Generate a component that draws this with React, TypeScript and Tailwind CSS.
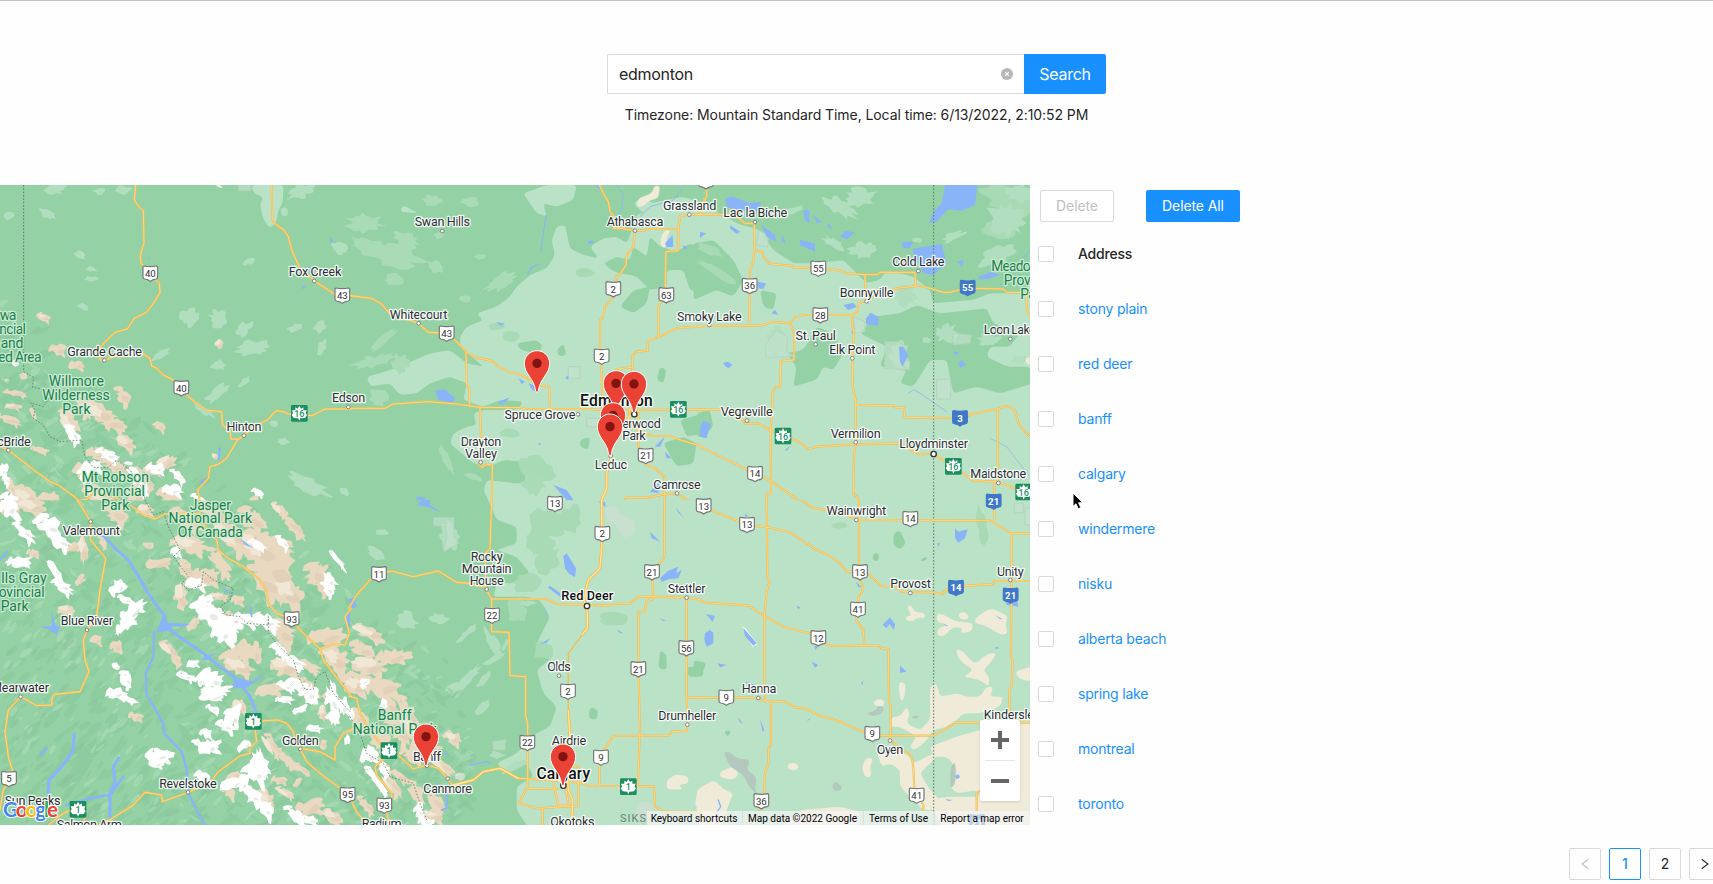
import React from "react";

type Tile = "A" | "B" | "C" | "D" | "E" | "F";
type Blob = [number, number, number, number, number];

const TILES: Tile[] = ["A", "B", "C", "D", "E", "F"];
const ORIGIN: Record<Tile, [number, number]> = {
  A: [0, 180], B: [350, 180], C: [700, 180], D: [0, 500], E: [350, 500], F: [700, 500],
};

let seed = 7;
const rnd = () => {
  seed = (seed * 16807) % 2147483647;
  return seed / 2147483647;
};

// An irregular polygon inscribed in a rotated ellipse.
const blobPath = ([x, y, w, h, deg]: Blob, rough = 0.46) => {
  const n = Math.max(8, Math.min(26, Math.round((w + h) / (rough > 0.5 ? 6 : 9))));
  const a = (deg * Math.PI) / 180;
  let d = "";
  for (let i = 0; i < n; i++) {
    const t = (i / n) * Math.PI * 2;
    const r = 1.18 - rnd() * rough;
    const px = (Math.cos(t) * w * r) / 2;
    const py = (Math.sin(t) * h * r) / 2;
    d += `${i ? "L" : "M"}${(x + px * Math.cos(a) - py * Math.sin(a)).toFixed(1)} ${(y + px * Math.sin(a) + py * Math.cos(a)).toFixed(1)}`;
  }
  return d + "Z";
};

const streaks = (count: number, size: number) => {
  let d = "";
  for (let i = 0; i < count; i++) {
    const x = rnd() * 470;
    const y = 265 + rnd() * 565;
    const edge = 295 + x * 0.8;
    if (y < edge + rnd() * 50) continue;
    const l = size * (0.5 + rnd());
    d += blobPath([x, y, l, l * (0.2 + rnd() * 0.25), x < 170 && y > 600 ? -60 + rnd() * 30 : rnd() > 0.35 ? -50 + rnd() * 40 : 30 + rnd() * 25]);
  }
  return d;
};
const DARK_STREAKS = streaks(1500, 16);
const LIGHT_STREAKS = streaks(800, 11);
const GREY_STREAKS = streaks(300, 12);

const farmland: Partial<Record<Tile, string[]>> = {
  A: ["755,15 850,15 848,70 835,90 830,125 810,145 790,118 780,75 790,50 760,40"],
  B: [
    "500,320 540,285 590,265 615,225 605,180 620,140 645,135 660,205 700,225 745,235 720,200 760,175 800,170 830,190 850,140 860,105 920,80 1060,90 1060,990 430,990 400,930 410,900 500,910 600,900 540,870 560,830 520,845 460,840 420,860 370,850 300,790 310,760 350,740 380,735 370,700 400,690 500,690 520,665 450,660 400,680 340,660 350,610 300,590 240,610 200,640 150,645 120,610 60,620 50,590 90,580 150,560 240,520 300,510 350,550 400,560 330,500 330,470 350,440 400,420 380,400 440,380 480,350",
    "520,40 590,15 680,15 670,60 620,80 580,70 590,110 560,100",
    "850,70 880,50 990,40 1060,60 1060,110 970,110 880,100",
    "150,95 160,75 205,100",
  ],
  C: ["-20,15 40,90 110,130 180,150 220,210 280,250 350,250 430,240 500,310 540,300 560,270 640,290 690,330 700,370 820,360 870,340 970,340 1000,300 1000,990 -20,990"],
  E: ["410,-10 440,60 500,80 500,130 440,150 500,170 540,220 490,250 440,250 430,290 530,290 570,300 600,350 560,430 610,470 560,510 580,580 620,620 600,680 560,700 500,760 440,790 460,810 530,790 550,830 500,860 500,930 540,990 1060,990 1060,-50 410,-50"],
  F: ["-20,-50 1000,-50 1000,990 -20,990"],
};

const forest: Partial<Record<Tile, string[]>> = {
  B: [
    "690,15 790,15 800,60 850,110 830,160 800,160 740,140 700,200 660,170 670,110",
    "930,200 980,215 1020,190 1050,200 1050,340 1020,330 1000,270 950,270 950,320 900,330 860,290 790,275 760,250 800,230 840,240 850,200 890,230 900,170",
    "870,15 1060,15 1060,70 1000,50 900,70", "500,490 560,480 580,500 560,520 510,510",
    "620,510 640,490 650,525 625,530", "850,330 900,320 890,370 850,400 810,380", "930,560 950,570 940,610 920,600",
    "940,790 1000,770 1040,790 1030,850 980,860", "990,720 1060,700 1060,760 1010,770", "690,780 720,770 715,810 690,800",
  ],
  C: [
    "-20,190 40,180 100,240 130,300 100,350 50,330 -20,360",
    "520,410 600,400 650,375 720,400 860,385 880,430 960,460 930,500 870,500 860,530 920,560 990,560 1000,610 900,640 830,620 760,640 740,540 690,540 640,620 600,610 620,570 540,560 560,500 480,460",
    "310,510 350,440 400,460 430,520 400,570 370,560 350,600 280,620 290,560 260,520",
    "180,330 230,340 220,390 190,380", "-10,700 30,690 40,740 10,770 -10,770",
  ],
  E: ["1010,500 1060,500 1060,530 1015,530", "930,450 950,465 950,510 925,505", "720,620 745,630 740,660 715,655"],
  F: ["580,100 600,90 618,130 600,150 580,135", "520,160 538,160 535,185 517,180", "665,175 682,170 678,183 662,183", "-20,480 20,490 5,520 -20,520", "70,695 95,690 85,712"],
};

const soft: Partial<Record<Tile, Blob[]>> = {
  A: [[25,108,35,25,0],[140,100,60,28,30],[165,25,70,35,0],[300,33,40,22,0],[370,30,50,30,0],[240,225,45,25,20],[275,268,40,18,0],[275,297,50,20,0],[850,95,25,35,0],[900,35,90,45,-20],[750,243,42,22,-30],[1020,205,60,36,20],[570,412,60,60,10],[655,415,60,60,0],[730,447,65,38,-40],[885,445,50,26,-15],[960,440,50,40,-50],[965,500,25,50,20],[760,505,110,50,-10],[655,555,50,36,0],[735,605,50,22,-40],[650,640,90,35,-40],[820,730,30,26,0],[850,787,34,26,0],[925,915,140,48,25],[1035,935,40,25,50],[250,380,40,20,20],[480,525,65,26,-35],[610,690,80,24,30]],
  B: [[45,130,120,60,0],[120,225,220,70,15],[170,180,90,45,20],[245,62,60,38,10],[360,65,60,30,0],[255,260,55,38,20],[390,230,40,20,0],[130,300,60,40,0],[450,305,110,45,-30],[345,357,40,22,0],[265,165,35,22,0],[70,545,150,35,-12],[85,650,70,50,20],[60,545,50,34,0],[150,550,55,60,0],[290,840,90,26,65],[370,890,60,20,20],[550,910,80,70,40]],
  C: [[420,80,120,50,30],[480,50,100,60,0],[490,210,90,50,0],[280,90,70,20,-20],[920,120,120,100,20],[960,40,90,50,0],[760,170,80,28,-20],[650,180,30,20,0],[400,190,80,30,30],[890,230,120,60,-20],[620,350,80,60,0],[600,530,60,90,0],[740,460,70,60,0],[230,480,60,90,0],[680,480,30,20,0],[870,480,80,40,0],[960,540,50,30,0]],
  E: [[95,97,50,16,0],[75,160,60,34,30],[265,355,60,35,0],[350,400,80,20,-40],[350,540,130,30,-50],[430,480,80,22,-30],[320,560,90,26,-20],[400,620,60,26,-40],[470,430,50,18,-60],[440,765,50,26,0],[490,800,90,22,-25],[170,360,70,50,30],[530,310,60,18,0],[430,430,110,30,60],[400,540,70,22,-50],[300,110,60,90,0]],
};
const mid: Partial<Record<Tile, Blob[]>> = {
  B: [[60,200,130,50,20],[100,480,110,24,-40],[480,470,60,40,0],[440,440,50,26,0],[700,280,60,30,0],[560,870,110,80,30],[480,760,60,26,0]],
  C: [[930,60,180,80,20],[60,280,140,26,30],[30,210,90,28,20],[900,150,100,60,0]],
  E: [[590,70,110,90,0],[570,130,100,70,20],[530,250,90,60,0],[790,357,90,40,0],[590,180,70,90,40],[500,330,60,80,0],[580,450,60,60,0],[660,60,70,90,20]],
  F: [[845,70,28,110,-15],[420,75,50,20,0],[850,110,28,50,0]],
};
const tan: Partial<Record<Tile, Blob[]>> = {
  A: [[133,412,42,24,20],[175,510,52,34,0],[232,557,50,28,0],[660,492,34,24,-40],[70,587,30,24,0],[370,650,60,40,50],[300,700,110,55,25],[340,730,90,45,20],[250,680,80,40,60],[210,730,80,50,60],[480,740,36,26,20],[50,640,80,20,10],[40,680,50,20,0],[30,720,90,24,20],[120,810,60,22,10],[380,790,60,40,30],[300,820,80,40,0],[350,865,90,40,30],[500,850,70,36,-40],[250,870,50,60,0],[430,900,100,44,40],[80,950,80,50,30],[150,960,70,50,0],[40,930,80,40,50],[300,950,90,60,30],[520,960,100,50,30],[780,975,60,36,30],[645,830,20,24,-40],[410,950,60,90,20],[100,700,40,18,60],[460,870,60,30,0],[20,600,20,10,0]],
  D: [[100,20,100,50,20],[30,25,80,50,0],[350,40,70,60,30],[440,30,50,40,0],[310,130,40,22,60],[445,135,36,22,0],[250,150,30,90,0],[220,140,60,30,-20],[480,190,90,30,-5],[570,135,110,50,10],[560,60,110,45,30],[640,40,110,45,30],[700,110,150,60,50],[760,60,90,60,40],[830,130,110,50,20],[780,150,120,90,40],[830,210,120,110,40],[800,250,120,70,50],[870,280,90,80,30],[660,190,110,40,55],[560,210,60,40,60],[545,290,36,90,0],[620,230,90,50,0],[580,370,60,26,-50],[200,330,50,28,-10],[350,440,34,40,0],[290,420,34,28,0],[510,450,70,34,40],[530,480,44,26,60],[730,450,80,60,-30],[720,500,90,50,20],[770,460,30,80,0],[850,400,80,70,40],[860,500,90,60,0],[930,500,70,36,20],[980,410,120,50,-10],[1010,480,80,70,40],[950,220,60,80,30],[970,260,60,40,60],[840,30,60,30,40],[880,80,110,36,50],[700,360,60,50,0],[660,290,60,24,0],[715,300,34,34,0],[810,570,90,36,-10],[720,620,40,50,0],[700,480,60,50,20],[410,650,46,30,0],[820,740,90,30,60],[860,780,90,30,45],[910,810,60,18,40],[970,640,26,60,0],[970,730,26,34,0],[840,840,50,26,0],[860,880,70,22,30],[890,850,40,20,-40],[930,920,90,50,-20],[1000,950,60,40,30],[700,830,60,26,-40],[690,880,40,30,30],[800,900,60,50,40],[100,160,40,24,0],[240,240,40,22,-50],[930,570,90,40,40],[1000,600,60,40,30]],
  E: [[60,400,100,40,25],[130,470,110,44,-5],[40,450,80,44,30],[60,500,100,60,0],[50,550,150,60,10],[110,560,90,60,0],[20,560,60,60,0],[120,620,80,50,60],[170,640,110,50,60],[200,690,110,60,30],[150,700,90,50,50],[230,740,90,60,0],[310,715,48,40,20],[30,660,70,50,50],[90,720,60,60,40],[280,800,90,26,40],[100,800,60,30,50],[50,920,80,26,50],[130,860,90,30,60],[200,880,80,40,60],[260,910,90,40,50],[250,950,70,40,0],[190,770,80,36,20],[150,830,60,26,30],[330,830,30,26,0]],
};
const snow: Partial<Record<Tile, Blob[]>> = {
  A: [[45,550,30,22,0],[220,765,60,36,55],[325,825,70,36,20],[280,860,70,40,-10],[260,880,40,70,20],[400,880,70,32,60],[470,865,60,34,0],[535,890,60,26,40],[520,930,60,36,0],[775,938,40,22,20],[10,870,26,50,20],[30,960,50,40,20],[20,900,40,26,60],[600,960,60,24,30],[430,930,30,60,0]],
  D: [[30,25,60,60,0],[75,100,90,34,45],[150,80,80,60,30],[180,125,90,40,40],[60,185,80,36,-10],[165,215,70,28,60],[190,260,70,34,30],[355,260,70,40,-50],[400,330,100,36,-35],[380,370,90,36,-40],[380,300,60,24,20],[530,155,30,40,0],[590,250,60,40,0],[630,340,90,70,30],[680,370,110,60,30],[740,360,80,40,10],[800,365,90,44,20],[670,400,60,60,0],[620,300,40,36,0],[775,135,60,26,20],[850,130,60,26,45],[1015,183,85,16,52],[990,240,36,60,-30],[985,270,50,30,50],[840,450,50,36,30],[880,485,90,34,30],[350,500,34,24,30],[380,540,50,36,60],[350,580,60,36,0],[380,595,70,22,20],[580,490,40,26,-20],[560,530,60,24,20],[600,540,24,44,0],[640,540,70,60,20],[650,570,100,28,-5],[640,590,90,26,-5],[640,628,44,24,20],[700,650,44,80,30],[680,680,60,34,20],[620,700,36,30,0],[630,740,70,50,-20],[590,725,34,24,0],[735,735,60,26,-40],[855,600,60,22,0],[900,628,50,22,-30],[900,560,80,44,20],[930,580,50,60,0],[1000,600,40,110,-10],[1030,620,40,60,0],[1000,650,34,60,0],[945,685,50,22,0],[480,765,80,44,0],[470,790,44,30,0],[610,830,44,34,20],[780,790,50,110,-10],[770,820,60,60,20],[700,850,90,34,-20],[760,890,70,44,40],[800,930,44,50,30],[890,950,90,34,40],[930,960,60,30,0],[730,850,34,60,0],[1040,720,20,34,0],[860,560,60,26,20]],
  E: [[42,545,38,22,0],[100,610,26,34,0],[60,765,50,60,-20],[80,840,110,24,50],[105,810,44,28,60],[210,930,30,60,0],[230,965,50,24,0],[5,640,16,50,0],[40,560,20,20,0],[100,875,50,16,50]],
};
const beige: Partial<Record<Tile, string[]>> = {
  B: ["860,80 865,55 905,40 915,15 930,20 925,55 900,60 880,80", "930,175 945,150 963,152 950,170 950,200 935,203"],
  C: ["975,535 990,530 990,555 980,552"],
  A: ["645,15 665,15 668,25 655,22"],
  F: [
    "620,320 635,315 642,335 675,340 675,355 650,352 640,365 615,360 620,348 635,348",
    "710,340 735,345 760,362 820,370 815,395 780,400 790,385 760,380 730,410 710,405 715,385 740,375 710,365",
    "775,340 795,335 808,352 795,360 778,355", "825,355 870,325 900,335 925,350 915,375 925,400 900,405 880,390 850,375 825,370",
    "770,445 790,455 810,480 830,490 850,470 870,460 890,460 870,490 850,510 870,535 865,560 840,540 815,535 790,530 820,510 790,490 770,465",
    "597,545 617,550 615,585 605,607 597,580", "520,605 540,595 555,605 548,620 525,618",
    "690,560 710,550 720,590 770,580 800,590 840,590 860,560 880,560 870,590 910,590 900,620 840,640 790,640 770,660 740,680 700,690 680,720 660,740 640,750 630,740 650,710 600,680 570,680 575,650 600,650 620,620 630,640 620,670 660,690 690,660 690,600",
    "945,515 992,500 992,545 955,535", "485,800 500,772 520,775 510,800 515,830 495,832",
    "530,755 560,760 620,760 640,790 700,760 710,770 680,800 660,820 690,870 720,900 700,930 670,930 600,860 600,810 570,790 545,800",
    "690,740 770,710 840,690 990,660 990,980 720,975 690,900 740,890 840,890 830,870 770,880 750,860 760,790 740,770 700,770",
    "60,815 100,800 118,820 100,840 60,832", "262,792 285,787 298,800 285,812 265,808",
    "-10,870 40,840 75,870 100,880 80,930 70,975 -10,975", "300,930 420,920 480,935 480,975 250,975",
  ],
  E: ["950,840 980,822 1015,830 1015,850 985,855 1000,868 950,868", "1040,880 1060,870 1060,930 1035,920"],
};
const grey: Partial<Record<Tile, string[]>> = {
  F: ["70,755 90,755 110,775 150,780 140,810 170,830 165,870 175,885 150,865 130,825 90,800", "500,640 530,630 530,618 552,620 548,640 515,650", "397,850 410,845 430,865 410,875 398,870", "752,800 765,785 768,820 765,855 750,865", "630,650 660,645 650,658"],
  E: ["315,830 345,815 345,840 318,835", "850,960 870,900 915,915 900,950", "695,315 720,310 730,325 720,335 700,330", "615,870 640,875 650,900 660,880 680,900 665,920 625,915", "765,20 800,20 805,40 850,60 855,100 820,115 800,75 770,60"],
};
const outlines: Partial<Record<Tile, string[]>> = {
  A: ["715,15 753,15 753,33 715,33"],
  B: ["655,560 690,560 690,595 655,595", "710,715 755,715 755,740 710,740"],
  C: ["177,150 207,165 203,200 170,195", "195,495 230,450 262,470 260,515 290,530 200,532", "710,600 752,597 752,657 710,657", "760,460 815,465 810,490 760,495", "460,410 495,425 495,455 465,460", "555,485 600,485 600,540 630,543 630,570 553,565"],
  E: ["250,52 312,52 312,110 328,130 305,142 280,155 290,115 288,80 250,78", "428,725 468,718 465,750 430,750"],
  F: ["943,10 970,10 970,38 943,38", "975,25 992,25 992,75 975,75"],
};
const water: Partial<Record<Tile, string[]>> = {
  A: ["988,170 1000,182 992,190", "905,317 918,320 908,328", "655,805 663,800 660,835 653,843", "920,255 932,265 928,275", "443,236 450,232 448,240", "600,905 622,890 605,925"],
  B: ["712,185 725,180 732,188 718,192", "945,190 968,165 970,200 950,202", "440,425 465,432 450,437", "535,610 562,618 560,637 545,628", "505,595 525,605 515,612", "255,630 285,628 315,655 310,668 265,660", "445,665 480,652 465,668 450,675", "645,595 655,585 655,600", "565,790 575,790 568,797", "915,800 945,768 930,800", "945,815 965,835 950,835", "200,950 225,952 222,968 260,990 200,990", "610,915 650,930 672,962 650,960", "735,15 750,15 748,30", "900,935 930,905 925,940", "1000,195 1015,205 1000,208"],
  C: ["735,15 832,15 825,75 785,92 745,88 710,125 687,130 700,95 725,70", "640,205 725,192 740,250 700,285 670,280 655,250 640,240", "605,185 640,185 630,205 610,205", "75,55 100,50 150,70 182,65 180,95 110,90 80,80", "90,135 120,155 110,162 90,145", "185,135 225,165 230,185 200,170", "310,90 328,90 328,130 315,120", "340,105 365,125 350,130", "420,170 435,153 465,157 440,178", "300,180 345,190 345,215 300,195", "385,130 398,150 380,138", "248,165 258,190 245,185", "430,375 460,368 470,380 445,390", "498,415 512,398 535,410 535,438 498,432", "833,290 875,275 900,285 865,297 840,298", "597,500 610,500 625,525 608,560 600,545", "775,550 785,540 798,555 780,563", "70,548 85,545 97,555 85,565 75,558", "0,740 10,722 32,730 20,775 0,770", "770,245 790,240 788,262", "173,305 198,310 190,327 175,325", "455,450 460,458 455,462", "760,515 780,515 765,527", "255,810 270,798 262,812", "0,155 18,160 0,175", "225,390 235,405 215,400"],
  D: ["490,345 500,368 570,372 550,380 512,378 520,390 490,395 470,395", "720,115 760,145 735,135", "700,535 725,535 755,545 795,520 775,540 755,552 740,565 725,565 700,565", "155,330 165,375 180,380 170,405 150,390 120,380 155,378", "1038,340 1050,330 1050,380 1040,370", "425,238 432,245 445,275 430,265", "610,470 645,460 625,480 605,480"],
  E: ["200,15 222,-5 240,-5 240,15 275,38 235,22", "640,168 650,160 678,205 675,232 658,222 645,205", "593,262 600,258 630,278 632,292", "930,235 955,212 985,200 978,220 995,210 985,235 955,238 935,245", "900,95 930,125 905,115", "570,432 600,415 590,428", "-5,298 15,290 20,320 5,328", "585,315 590,350 588,352", "745,5 765,5 768,22", "285,755 300,765 285,765", "975,20 1003,55 985,38", "800,388 820,400 810,400", "930,355 948,362 938,363"],
  F: ["765,85 775,95 803,88 795,115 775,128 765,115", "548,375 570,352 585,372 582,390 568,372 560,385", "130,383 170,430 160,437 135,408", "15,400 30,390 40,398 40,430 20,440 13,420", "18,342 45,348 38,365", "335,485 355,495 345,503", "600,497 620,515 600,518", "180,657 193,690 188,697", "52,490 80,495 60,502", "885,345 907,357 900,358", "910,290 920,280 945,270 955,320 920,315", "270,160 282,170", "888,440 898,445 885,447", "710,130 720,130 716,140", "343,438 355,440 345,450", "765,828 775,822 780,832 770,838", "735,898 760,900 745,903", "468,245 485,262 475,262", "483,548 490,542 488,555", "320,663 333,652 328,660", "115,652 128,672 118,665", "725,368 745,378 738,378", "288,318 302,322 295,328", "135,40 145,50 135,50"],
};
const rivers: Partial<Record<Tile, [string, number][]>> = {
  D: [
    ["300,95 350,150 385,180 410,220 435,265 465,310 495,350 495,380 560,425 610,460 660,500 700,530 720,550 750,590 770,640 775,670", 9],
    ["462,395 460,470 437,520 440,585 470,635 490,670 492,700 545,755 560,810 565,880 590,930 615,975", 7],
    ["222,703 220,750 185,800 147,840 145,880", 10], ["355,775 340,800 345,850 330,880 330,950", 10],
    ["370,830 330,885 270,895 200,915", 8], ["120,765 140,745", 7], ["0,180 22,155", 6], ["750,320 755,350", 5], ["670,268 695,280", 4], ["55,900 45,930", 4],
  ],
  B: [["588,105 578,175 572,220", 3], ["568,252 545,262 533,282", 4], ["800,15 820,45 815,90 800,120", 2.5], ["1000,20 970,60 900,80 870,110", 2.5]],
  E: [["310,855 290,880 290,925 275,930", 6], ["360,795 410,785 420,790", 4]],
  C: [["625,640 640,628 660,640 740,695", 2.5], ["990,210 960,250", 3], ["870,775 920,800 950,840 990,890", 2]],
  F: [["55,900 62,920 52,935", 4], ["140,548 160,555", 5]],
};

const roads: Record<Tile, string[]> = {
  A: [
    "407,15 403,60 415,78 430,92 432,190 421,225 423,250 450,280 478,310 480,338 462,368 438,398 403,415 382,447 345,457 318,483 303,500 300,540 313,541 340,530 430,522 450,535 455,558 470,565 490,585 520,600 544,625 565,650 590,670 617,690 665,695 667,735 690,750 693,777 715,777",
    "1055,687 975,687 935,707 865,702 850,695 830,692 820,700 805,718 778,732 745,755 731,767 712,780 680,835 655,853 630,860 625,895 593,930 600,965 600,1010",
    "815,15 817,120 830,135 852,150 865,170 875,210 900,265 943,303 1005,343 1027,347 1055,347",
    "0,800 25,811 40,822 95,865 150,905 175,915 230,955 255,995", "232,962 260,958 285,935 300,930", "300,940 350,955 410,992",
  ],
  B: [
    "0,347 65,355 95,372 118,400 205,430 235,457 290,460 315,480 350,517 375,532 425,542 445,560 475,575 515,585 560,612 598,622 600,688",
    "348,517 350,615 358,625 358,675", "0,685 105,685 130,672 235,665 320,672 360,678 390,682 510,683 530,687 700,687 760,690 1055,689",
    "390,682 393,780 392,845 385,852 397,862 407,853 427,855 425,990", "425,978 468,978 470,967 820,967 830,953 890,953 945,943 980,940 1010,960 1055,977",
    "748,15 760,40 775,65 780,95 790,105 790,145 815,145 855,152 880,152 890,147 985,147 985,212 948,215 945,345 925,380 925,470",
    "985,147 990,108 1018,104 1055,104", "855,152 850,200 830,225 828,255 812,280 798,290 795,325 790,350 765,380 760,410 750,420 750,510 755,580 758,690",
    "1055,440 985,443 925,470 893,485 893,512 860,515 847,528 847,690", "780,600 800,567 845,562", "865,690 865,800 887,828 890,855 915,865 943,890 945,990",
    "760,690 770,740 840,735 865,750 905,768 960,768 985,778 1055,799", "840,680 835,720",
  ],
  C: [
    "-5,104 100,104 135,130 163,130 163,210 160,245 150,270 148,430", "163,212 187,215 190,230 210,252 275,257 280,262 355,265 415,270 440,280 495,284 530,284 540,277 645,277 647,318", "495,284 497,350 500,362",
    "500,362 475,370 473,395 455,405 310,405 285,412 270,430 220,425 180,437 -5,438", "270,430 283,460 282,540 242,543 241,620 225,622 217,640 217,690 212,745 213,940 200,942 198,990",
    "455,405 457,440 462,450 457,535 458,620 467,660 467,790 462,830 460,940 475,955 477,990", "500,362 530,345 590,325 660,317 690,325 730,337 750,337 785,328 805,325 910,327 920,337 990,338", "980,340 980,390 992,412",
    "467,675 580,677 585,682 612,682 614,712 760,714 800,712 810,703 850,695 893,687 920,677 945,690 955,730 985,767 992,760", "893,687 893,905",
    "-5,688 90,690 120,710 135,730 175,730 210,750 250,768 300,787 325,807 350,800 467,793 600,790 655,822 700,822 760,860 820,902 893,905 945,925 992,930", "883,905 883,990", "-5,797 140,868 165,880 215,905 330,985 370,992", "20,15 20,50 5,75 0,104",
  ],
  D: [
    "228,-5 245,20 272,65 272,120 317,175 300,270 290,350 262,390 250,420 255,480 267,515 240,575 165,583 157,590 155,615 110,617 62,590 25,630 15,695 25,770 40,820 10,870 0,930",
    "390,15 430,45 465,57 495,42 600,40", "600,0 600,60 650,120 655,150 685,175 730,200 780,240 800,275 805,310 830,340 875,357 900,390 960,447 970,480 1000,520 1055,590", "960,447 1000,432 1035,435 1048,400 1035,350 1055,323",
    "145,975 190,940 235,920", "250,975 255,950", "290,980 345,950 400,915 435,877 485,885 487,905 565,877 630,847 655,815 720,768 750,760 750,745 770,725 762,665 795,662 835,660 860,670 880,695 885,720 900,745 960,755 1005,780 1005,740 1030,700 1055,692", "900,745 920,785 960,820 1020,865 1055,890",
  ],
  E: [
    "-5,588 20,595 30,640 60,690 95,737 115,750", "-5,693 20,680 55,690", "115,750 150,770 190,807 230,795 265,805 292,835 310,857 370,840 400,815 450,805 505,835 630,842 700,850 715,858 860,858 912,860 915,920 945,935 1055,938", "115,765 75,800 80,825 125,880 125,895 105,915 120,980", "-5,885 20,935 45,968",
    "425,-5 420,145 405,160 408,268 425,297 425,395 477,397 480,527 527,530 527,650 533,670 533,865 625,867", "-5,327 20,285 60,240 85,222 125,213 190,230 265,213 320,247 360,250 385,258 410,260",
    "425,297 590,297 620,312 710,315 780,317 790,312 840,310 865,290 910,290 1010,293 1055,300", "943,-5 943,170 930,190 905,205 910,297 890,303 885,333 865,337 865,500 870,690 863,858",
    "1010,293 1010,590 1012,672 1010,693 965,695 955,707 790,708 770,740 750,760 748,858", "1010,593 1055,593", "530,865 507,910 560,925 685,918 685,800 625,800", "578,925 578,980", "610,845 625,918 655,915 648,865 635,850",
  ],
  F: [
    "-5,5 30,30 120,65 140,75 210,83 270,97 320,130 350,150 385,165 420,190 440,215 480,215 505,222 545,258 590,262 605,275 700,277 725,283 745,265 800,257 875,253 885,243 992,243", "200,-5 202,230 208,245 200,275 193,350 193,580 197,603",
    "298,-5 335,22 375,30 440,45 470,60 870,62 935,100 992,100", "883,0 883,62", "935,100 933,470 938,480 935,560 928,570 928,640", "477,-5 477,195 480,240 487,260 487,275 475,290 475,330 468,360 490,390 493,435",
    "-5,300 20,308 145,317 180,340 250,380 340,403 370,430 395,438 493,437 535,437 545,445 565,447 567,600 572,620 572,722", "-5,593 160,593 195,603 255,605 285,622 315,625 360,648 400,658 490,695 540,707 700,707 740,685 765,668 992,668",
    "213,605 213,735 205,745 205,790 195,820 193,870 180,935", "572,722 635,770 640,800 643,870 670,915 670,935", "842,870 830,880 830,935",
  ],
};
const thin: Partial<Record<Tile, string[]>> = { E: ["697,403 655,460 655,632"] };
const wide: Partial<Record<Tile, string[]>> = {
  B: ["780,700 783,830 770,880 770,925 755,960 755,990", "848,700 830,720"],
  E: ["755,-5 755,140 750,205 715,240 707,270 702,315 712,335 712,385 695,405", "655,630 658,680 660,710 650,790 655,870 668,900 665,980", "310,855 370,840 400,815 450,805 505,835"],
};
const borders: Partial<Record<Tile, string[]>> = {
  A: ["71,15 71,575", "71,575 100,592 98,622 125,627 150,650 130,680 92,668 105,690 100,715 130,735 150,770 180,785 245,780 255,830 280,862 325,862 350,840 390,870 410,900 430,930 435,960 450,990"],
  C: ["701,15 701,990"],
  D: ["435,0 460,45 490,35 505,80 540,150 520,170 565,230 545,250 565,272 605,255 610,215 640,240 700,265 690,300 660,320 680,345 720,350 740,370 805,375 805,350 805,400 830,430 880,480 895,530 915,568 940,568 950,530 975,515 1000,580 1050,635"],
  E: ["0,650 30,700 50,760 100,790 120,830 190,850 210,910 230,960"],
  F: ["701,0 701,975"],
};

type Label = [Tile, string, number, number, number, ("park" | "city" | "big")?];
const labels: Label[] = [
  ["A","wa",24,420,50,"park"],["A","ncial",38,462,80,"park"],["A","and",36,504,68,"park"],["A","ed Area",60,546,130,"park"],
  ["A","Willmore",229,618,165,"park"],["A","Wilderness",228,659,203,"park"],["A","Park",229,701,85,"park"],
  ["A","Mt Robson",346,906,202,"park"],["A","Provincial",344,948,182,"park"],["A","Park",346,990,84,"park"],
  ["D","Jasper",631,28,124,"park"],["D","National Park",631,69,251,"park"],["D","Of Canada",631,111,195,"park"],
  ["D","lls Gray",72,249,136,"park"],["D","ovincial",65,291,138,"park"],["D","Park",44,334,84,"park"],
  ["E","Banff",134,659,102,"park"],["E","National Park",134,702,251,"park"],
  ["C","Meadow Lake",990,272,232,"park"],["C","Provincial",998,314,174,"park"],["C","Park",1000,357,78,"park"],
  ["A","Fox Creek",945,289,158],["A","Grande Cache",314,528,224],["A","Hinton",732,753,105],["A","cBride",42,797,100],["A","Edson",1046,667,100],
  ["D","Valemount",274,105,172],["D","Blue River",261,376,157],["D","learwater",72,577,150],["D","Golden",901,734,110],["D","Revelstoke",564,864,173],["D","Sun Peaks",98,914,168],["D","Salmon Arm",268,987,195],
  ["B","Swan Hills",277,138,166],["B","Athabasca",855,138,170],["B","Grassland",1019,91,160],["B","Whitecourt",206,416,173],["B","Spruce Grove",570,716,213],["B","Drayton",393,798,122],["B","Valley",393,834,96],["B","Leduc",783,868,97],["B","Sherwood",855,745,155],["B","Park",852,781,70],["B","Camrose",981,927,143],["B","Edmonton",799,677,218,"big"],
  ["C","Lac la Biche",166,112,192],["C","Cold Lake",655,259,157],["C","Bonnyville",500,351,161],["C","Smoky Lake",28,423,194],["C","St. Paul",347,480,121],["C","Elk Point",457,522,139],["C","Loon Lake",929,463,156],["C","Vegreville",140,709,156],["C","Vermilion",467,774,150],["C","Lloydminster",701,805,207],["C","Maidstone",895,895,168],
  ["E","Rocky",410,183,96],["E","Mountain",410,219,149],["E","House",410,255,102],["E","Red Deer",712,300,156,"city"],["E","Stettler",1010,280,113],["E","Olds",627,514,71],["E","Drumheller",1012,661,174],["E","Airdrie",657,735,103],["E","Calgary",640,836,161,"big"],["E","Canmore",293,878,146],["E","Banff",231,783,84],["E","Okotoks",667,979,133],["E","Radium",95,985,120],
  ["F","Wainwright",469,46,179],["F","Provost",632,265,122],["F","Unity",931,227,80],["F","Hanna",177,580,104],["F","Oyen",570,763,79],["F","Kindersley",935,658,168],
];
const dots: [Tile, number, number, boolean?][] = [
  ["A",943,303],["A",313,541],["A",732,767],["A",25,811],["A",1045,681],["D",272,65],["D",261,390],["D",62,590],["D",901,747],["D",564,877],
  ["B",277,153],["B",855,152],["B",1018,104],["B",206,430],["B",684,703],["B",392,847],["B",782,828],["B",981,940],["B",853,703,true],
  ["C",165,126],["C",655,273],["C",500,364],["C",28,435],["C",347,493],["C",457,535],["C",931,477],["C",141,722],["C",467,787],["C",701,822,true],["C",895,909],
  ["E",410,268],["E",711,318,true],["E",1010,293],["E",627,527],["E",1012,674],["E",640,857,true],["E",293,836],["E",231,797],
  ["F",469,60],["F",631,279],["F",931,240],["F",175,594],["F",570,722],
];
type Shield = [Tile, string, number, number, ("leaf" | "blue")?];
const shields: Shield[] = [
  ["A","40",451,280],["A","43",1027,346],["A","40",544,624],["A","16",898,700,"leaf"],["B","43",290,460],["B","2",790,327],["B","63",949,345],["B","2",755,529],["B","16",985,688,"leaf"],["B","21",887,827],["B","13",615,971],
  ["C","55",355,265],["C","36",149,317],["C","28",361,405],["C","55",803,323,"blue"],["C","3",780,714,"blue"],["C","16",249,768,"leaf"],["C","16",760,859,"leaf"],["C","16",971,936,"leaf"],["C","14",165,881],["C","21",881,964,"blue"],["C","13",11,978],["C","",18,3],
  ["D","93",875,357],["D","1",760,664,"leaf"],["D","5",27,836],["D","1",234,928,"leaf"],["D","95",1043,884],
  ["E","11",87,222],["E","22",426,346],["E","2",757,101],["E","21",906,216],["E","56",1009,444],["E","21",865,507],["E","2",654,574],["E","22",532,728],["E","1",117,752,"leaf"],["E","9",753,772],["E","1",835,860,"leaf"],["E","93",103,916],
  ["F","13",141,74],["F","14",631,56],["F","13",480,216],["F","14",768,263,"blue"],["F","41",474,328],["F","21",932,286,"blue"],["F","12",355,414],["F","9",79,592],["F","9",517,701],["F","41",650,886],["F","36",184,903],["F","21",831,966,"blue"],
];
const pins: [Tile, number, number][] = [["B",561,550],["B",798,610],["B",852,612],["B",789,706],["B",780,740],["E",228,710],["E",639,770]];

const SHIELD = "M-22 -19Q-22 -22 -19 -22Q0 -18 19 -22Q22 -22 22 -19L22 11Q22 16 17 17Q7 18 0 24Q-7 18 -17 17Q-22 16 -22 11Z";
const LEAF = "M0 -23L5 -14L12 -18L12 -9L22 -9L19 0L23 5L17 14L3 15L1 21L-1 21L-3 15L-17 14L-23 5L-19 0L-22 -9L-12 -9L-12 -18L-5 -14Z";

// Closed outline with softened corners; long straight edges stay straight.
const rounded = (pts: string) => {
  const p = pts.split(" ").map((s) => s.split(",").map(Number));
  const toward = (a: number[], b: number[]) => {
    const len = Math.hypot(b[0] - a[0], b[1] - a[1]) || 1;
    const k = Math.min(12, len / 2) / len;
    return `${(a[0] + (b[0] - a[0]) * k).toFixed(1)} ${(a[1] + (b[1] - a[1]) * k).toFixed(1)}`;
  };
  return p
    .map((q, i) => `${i ? "L" : "M"}${toward(q, p[(i + p.length - 1) % p.length])}Q${q[0]} ${q[1]} ${toward(q, p[(i + 1) % p.length])}`)
    .join("") + "Z";
};

const tr = (t: Tile) => `translate(${ORIGIN[t][0]} ${ORIGIN[t][1]}) scale(0.333333)`;
const Layer = ({ draw }: { draw: (t: Tile) => React.ReactNode }) => (
  <>{TILES.map((t) => <g key={t} transform={tr(t)} clipPath={t === "A" || t === "B" || t === "C" ? "url(#upper)" : "url(#lower)"}>{draw(t)}</g>)}</>
);
const polys = (list: string[] | undefined, fill: string, round = true) =>
  list?.map((p, i) => (round ? <path key={i} d={rounded(p)} fill={fill} /> : <polygon key={i} points={p} fill={fill} />));
const blobs = (list: Blob[] | undefined, fill: string, rough = 0.46) => list && <path d={list.map((b) => blobPath(b, rough)).join("")} fill={fill} />;
const shadeOf = (list: Blob[] | undefined) =>
  list?.flatMap(([x, y, w, h, a], i): Blob[] => (i % 5 === 4 ? [] : [[x + w * 0.12, y + h * 0.16, w * 0.5, h * 0.4, a - 15]]));
// Side ridges branching off each peak.
const ridgesOf = (list: Blob[] | undefined) =>
  list?.flatMap(([x, y, w, h, a]): Blob[] => {
    const c = Math.cos((a * Math.PI) / 180) * w * 0.4;
    const s = Math.sin((a * Math.PI) / 180) * w * 0.4;
    const r = Math.min(w, h);
    return w + h < 62 ? [] : [[x - c, y - s - r * 0.15, r * 0.95, r * 0.4, a - 55], [x + c * 0.5, y + s * 0.5 + r * 0.3, r * 1.1, r * 0.38, a + 50]];
  });

const MapArt = () => {
  seed = 4242;
  return (
    <svg className="block h-[640px] w-[1030px]" viewBox="0 185 1030 640">
      <defs>
        <clipPath id="upper"><rect x="-20" y="0" width="1100" height="961" /></clipPath>
        <clipPath id="lower"><rect x="-20" y="0" width="1100" height="980" /></clipPath>
      </defs>
      <rect y="185" width="1030" height="640" fill="#94d2a5" />
      <Layer draw={(t) => polys(farmland[t], "#bae2c7")} />
      <Layer draw={(t) => polys(forest[t], "#94d2a5")} />
      <Layer draw={(t) => blobs(mid[t], "#a7dab5")} />
      <Layer draw={(t) => blobs(soft[t], t === "B" ? "#a9dbb7" : "#b0debe", 0.6)} />
      <path d={DARK_STREAKS} fill="#84c597" opacity="0.5" />
      <path d={LIGHT_STREAKS} fill="#aedcbb" opacity="0.55" />
      <path d={GREY_STREAKS} fill="#8bbf9a" opacity="0.45" />
      <Layer draw={(t) => <>{blobs(tan[t], "#ead9c1", 0.6)}{blobs(ridgesOf(tan[t]), "#ead9c1")}{blobs(shadeOf(tan[t]), "#e3d0b8")}{blobs(tan[t]?.filter((_, i) => i % 3 === 0).map(([x, y, w, h, a]): Blob => [x - w / 5, y - h / 5, w * 0.7, h * 0.55, a]), "#f0e7d5", 0.6)}</>} />
      <Layer draw={(t) => <>{blobs(snow[t], "#ffffff", 0.62)}{blobs(ridgesOf(snow[t]), "#ffffff")}{blobs(shadeOf(snow[t])?.map(([x, y, w, h, a]): Blob => [x, y, w * 0.6, h * 0.6, a]), "#e8ebe7")}</>} />
      <Layer draw={(t) => polys(beige[t], "#f0ead9")} />
      <Layer draw={(t) => polys(grey[t], t === "E" ? "#c9dfcf" : "#b3c9bd")} />
      <Layer draw={(t) => outlines[t]?.map((p, i) => <polygon key={i} points={p} fill="#c4e3ce" fillOpacity="0.6" stroke="#b3cdbb" strokeWidth="2" />)} />
      <Layer draw={(t) => <>
        {t === "F" && <polygon points="127,380 136,385 172,432 158,440" fill="#fff" />}
        {rivers[t]?.map(([p, w], i) => <polyline key={i} points={p} fill="none" stroke="#8ab4f8" strokeWidth={w} strokeLinejoin="round" strokeLinecap="round" />)}
        {polys(water[t], "#8ab4f8", false)}
      </>} />
      <Layer draw={(t) => borders[t]?.map((p, i) => <polyline key={i} points={p} fill="none" stroke="#5c7a66" strokeWidth={p.split(" ").length < 3 ? 3 : 2.4} strokeDasharray="5 5" />)} />
      {["#f3bd4f", "#fde6a6"].map((c, k) => (
        <Layer key={c} draw={(t) => <g fill="none" stroke={c} strokeLinejoin="round">
          {roads[t].map((p, i) => <polyline key={i} points={p} strokeWidth={k ? 2 : 6.4} />)}
          {!k && thin[t]?.map((p, i) => <polyline key={`t${i}`} points={p} strokeWidth={4} />)}
          {wide[t]?.map((p, i) => <polyline key={`w${i}`} points={p} strokeWidth={k ? 4 : 9} />)}
        </g>} />
      ))}
      <g fontFamily="Roboto, sans-serif" textAnchor="middle">
        {dots.map(([t, x, y, big], i) => <g key={i} transform={tr(t)}><circle cx={x} cy={y} r={big ? 8 : 5.5} fill="#fff" stroke={big ? "#333" : "#707070"} strokeWidth={big ? 4 : 2.5} /></g>)}
        {shields.map(([t, n, x, y, kind], i) => (
          <g key={i} transform={`${tr(t)} translate(${x} ${y})`}>
            {kind === "leaf" ? <><rect x="-25" y="-25" width="50" height="50" rx="4" fill="#1b8f5f" /><path d={LEAF} fill="#fff" /></>
              : <path d={SHIELD} fill={kind === "blue" ? "#3f78c9" : "#fff"} stroke={kind === "blue" ? "#3f78c9" : "#747775"} strokeWidth="3.5" />}
            <text y="11" fontSize={kind === "leaf" ? 27 : 29} fontWeight={kind === "blue" ? 700 : kind ? 500 : 400} fill={kind === "leaf" ? "#1b8f5f" : kind === "blue" ? "#fff" : "#333"}>{n}</text>
          </g>
        ))}
        {labels.map(([t, s, x, y, w, k], i) => (
          <g key={i} transform={tr(t)}>
            <text x={x} y={y + 0.5} textLength={w} fontSize={k === "park" ? 42 : k === "big" ? 47 : k === "city" ? 39 : 38} fontWeight={k === "big" || k === "city" ? 500 : 400}
              fill={k === "park" ? "#188049" : k ? "#111" : "#2b2f33"} stroke={k === "park" ? "#d3eedb" : "#ffffff"} strokeOpacity="0.85" strokeWidth="8" strokeLinejoin="round" paintOrder="stroke">{s}</text>
          </g>
        ))}
      </g>
      {pins.map(([t, x, y], i) => (
        <g key={i} transform={`${tr(t)} translate(${x} ${y})`}>
          <path d="M0 -38C-21 -38 -38 -21 -38 0C-38 34 -8 44 -4 84Q0 90 4 84C8 44 38 34 38 0C38 -21 21 -38 0 -38Z" fill="#ea4335" stroke="#fff" strokeWidth="3" />
          <circle r="14" fill="#811411" />
        </g>
      ))}
    </svg>
  );
};

const Checkbox = () => <span className="block size-4 shrink-0 rounded-[2px] border border-[#d9d9d9] bg-white" />;

const addresses = ["stony plain", "red deer", "banff", "calgary", "windermere", "nisku", "alberta beach", "spring lake", "montreal", "toronto"];

const credits = ["Keyboard shortcuts", "Map data ©2022 Google", "Terms of Use", "Report a map error"];
const creditWidths = ["w-[96px]", "w-[121px]", "w-[71px]", "w-[95px]"];

export default function App() {
  return (
    <div className="relative h-[884px] w-full overflow-hidden border-t border-[#c3c3c3] bg-[#fefefe] font-['Inter',sans-serif] text-sm text-[#262626]">
      <header className="flex h-[184px] flex-col items-center pt-[53px]">
        <div className="flex h-10 w-[499px]">
          <div className="flex flex-1 items-center justify-between rounded-l-[2px] border border-r-0 border-[#d9d9d9] bg-white pr-[11px] pl-[11px]">
            <span className="text-base tracking-[-0.3px]">edmonton</span>
            <svg className="size-3" viewBox="0 0 12 12"><circle cx="6" cy="6" r="6" fill="#b7b7b7" /><path d="M4.2 4.2L7.8 7.8M7.8 4.2L4.2 7.8" stroke="#fff" strokeWidth="1.2" /></svg>
          </div>
          <button className="w-[82px] rounded-r-[2px] bg-[#1890ff] text-base tracking-[-0.3px] text-white">Search</button>
        </div>
        <p className="mt-[10px] leading-[22px] tracking-[-0.075px] whitespace-nowrap">Timezone: Mountain Standard Time, Local time: 6/13/2022, 2:10:52 PM</p>
      </header>

      <main className="flex">
        <section className="relative h-[640px] w-[1030px] shrink-0 overflow-hidden">
          <MapArt />
          <svg className="absolute bottom-0 left-0 h-[28px] w-[64px]" viewBox="0 0 64 28">
            <text x="3" y="20" textLength="55" fontSize="20.5" fontWeight="700" fontFamily="Lato, sans-serif" stroke="#fff" strokeWidth="2" paintOrder="stroke" strokeLinejoin="round">
              <tspan fill="#4285f4">G</tspan><tspan fill="#ea4335">o</tspan><tspan fill="#fbbc04">o</tspan><tspan fill="#4285f4">g</tspan><tspan fill="#34a853">l</tspan><tspan fill="#ea4335">e</tspan>
            </text>
          </svg>
          <div className="absolute right-[10px] bottom-[24px] flex h-[81px] w-10 flex-col items-center rounded-[2px] bg-white shadow">
            <div className="flex flex-1 items-center justify-center"><svg className="size-[18px]" viewBox="0 0 18 18"><path d="M9 0V18M0 9H18" stroke="#666" strokeWidth="4" /></svg></div>
            <div className="h-px w-[30px] bg-[#e6e6e6]" />
            <div className="flex flex-1 items-center justify-center"><svg className="size-[18px]" viewBox="0 0 18 18"><path d="M0 9H18" stroke="#666" strokeWidth="4" /></svg></div>
          </div>
          <div className="absolute right-0 bottom-0 flex h-[14px] items-center font-[Roboto,sans-serif] text-[10px] whitespace-nowrap text-black">
            <span className="pt-px text-[11px] tracking-[1px] text-[#6f7f76]">SIKS</span>
            {credits.map((c, i) => <span key={c} className={`flex h-[14px] items-center justify-center bg-[#f5f5f5]/70 pt-[2px] pr-px ${i < 3 ? "border-r border-[#d5e3d9]" : ""} ${creditWidths[i]}`}>{c}</span>)}
          </div>
        </section>

        <section className="flex min-w-0 flex-1 flex-col pt-[5px]">
          <div className="flex h-8 shrink-0 gap-8 pl-[10px]">
            <button className="h-8 w-[74px] rounded-[2px] border border-[#d9d9d9] bg-white tracking-[-0.1px] text-[#bfbfbf]">Delete</button>
            <button className="h-8 w-[94px] rounded-[2px] bg-[#1890ff] tracking-[-0.1px] text-white">Delete All</button>
          </div>
          <div className="mt-1 flex flex-col pl-2">
            <div className="flex h-[55px] items-center gap-6"><Checkbox /><span className="font-medium tracking-[-0.2px]">Address</span></div>
            {addresses.map((a) => (
              <div key={a} className="flex h-[55px] items-center gap-6"><Checkbox /><a className="tracking-[-0.2px] text-[#1890ff]">{a}</a></div>
            ))}
          </div>
          <nav className="mt-[17px] ml-[539px] flex gap-2">
            <span className="flex size-8 shrink-0 items-center justify-center rounded-[2px] border border-[#d9d9d9] text-[#bfbfbf]"><svg className="h-3 w-2" viewBox="0 0 8 12"><path d="M7.3 1.3L1 6L7.3 10.7" fill="none" stroke="currentColor" strokeWidth="1.1" /></svg></span>
            <span className="flex size-8 shrink-0 items-center justify-center rounded-[2px] border border-[#1890ff] font-medium text-[#1890ff]">1</span>
            <span className="flex size-8 shrink-0 items-center justify-center rounded-[2px] border border-[#d9d9d9]">2</span>
            <span className="flex size-8 shrink-0 items-center justify-center rounded-[2px] border border-[#d9d9d9]"><svg className="h-3 w-2" viewBox="0 0 8 12"><path d="M0.7 1.3L7 6L0.7 10.7" fill="none" stroke="currentColor" strokeWidth="1.1" /></svg></span>
          </nav>
        </section>
      </main>

      <svg className="absolute top-[491px] left-[1072px] h-[19px] w-[13px]" viewBox="0 0 13 19">
        <path d="M1 1V14.5L4 11.8L6.2 16.8L8.8 15.7L6.6 10.8H10.8Z" fill="#000" stroke="#fff" strokeWidth="1" />
      </svg>
    </div>
  );
}
